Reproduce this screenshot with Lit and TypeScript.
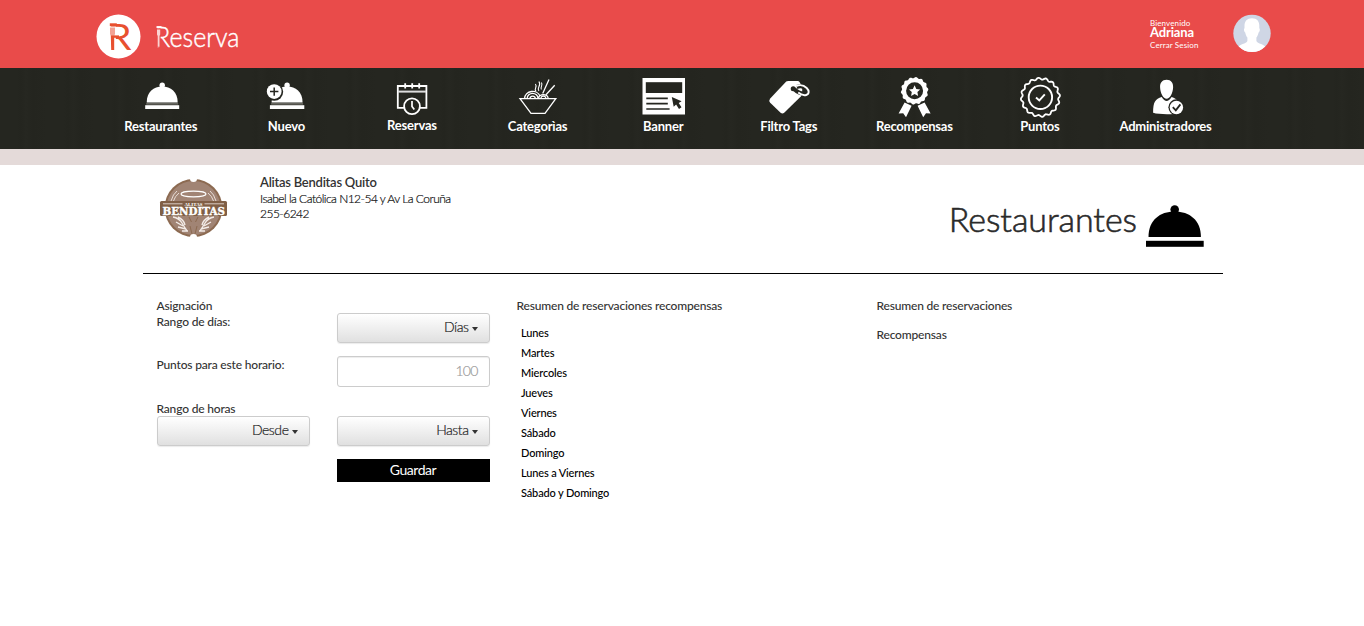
import { LitElement, html, svg, css } from "lit";
import { customElement } from "lit/decorators.js";

const scallop = (cx: number, cy: number, r: number, amp: number, lobes: number) => {
  const pts: string[] = [];
  for (let i = 0; i < 240; i++) {
    const a = (i / 240) * Math.PI * 2;
    const d = r + amp * Math.cos(a * lobes + Math.PI / 2);
    pts.push(`${(cx + d * Math.cos(a)).toFixed(2)},${(cy + d * Math.sin(a)).toFixed(2)}`);
  }
  return pts.join(" ");
};

// All menu artwork shares one sheet; each entry shows its own 60x48 window of it.
const MENU = [
  { label: "Restaurantes", art: svg`
    <circle cx="162" cy="85.3" r="2.7"/><path d="M146.5 102.6C146.5 92 153.5 86.6 162 86.6S177.5 92 177.5 102.6Z"/>
    <rect x="146" y="103" width="32" height="1.7" fill="#66665f"/><rect x="145" y="105.2" width="34" height="3.8"/>` },
  { label: "Nuevo", art: svg`
    <circle cx="287.5" cy="85.3" r="2.7"/><path d="M272 102.6C272 92 279 86.6 287.5 86.6S303 92 303 102.6Z"/>
    <rect x="271.5" y="103" width="32" height="1.7" fill="#66665f"/><rect x="270.3" y="105.2" width="34.4" height="3.8"/>
    <circle cx="274.6" cy="91.8" r="9" fill="#252620"/><circle cx="274.6" cy="91.6" r="7.4"/>
    <path d="M274.6 87.4v8.4M270.4 91.6h8.4" stroke="#252620" stroke-width="1.5"/>` },
  { label: "Reservas", art: svg`
    <path d="M404.5 107.8H397.8V86H426.4V107.8H419.5M405.2 83.2V88.4M412.2 83.2V88.4M419.2 83.2V88.4" fill="none" stroke="#fff" stroke-width="1.8"/>
    <path d="M398 91.6H426" stroke="#ddd" stroke-width="2"/>
    <circle cx="412" cy="106.2" r="7.9" fill="none" stroke="#fff" stroke-width="1.8"/><path d="M412 101v5.4l2.3 3" fill="none" stroke="#fff" stroke-width="1.7"/>` },
  { label: "Categorìas", art: svg`
    <g fill="none" stroke="#fff" stroke-width="1.3"><path d="M519.6 98.6H555.4L544.6 113.4H530.6Z"/>
    <path d="M524.2 98.3a8 7.4 0 0 1 15.5-2M526.8 98.3a5.4 5 0 0 1 10.8 0M529.5 98.3a2.8 2.6 0 0 1 5.5 0M538.2 98a5 4.6 0 0 1 9.6 0M540.5 98a2.6 2.5 0 0 1 5 0"/>
    <path d="M548.6 79.5L542.3 93.5M554.3 85.2L545.6 94.8"/><path d="M535.6 91.5c-2.8-3 2-4-.6-7.5M538.5 91c-2.8-3.5 3-5 0-9.5M541 89.5c-1.6-2.5 2-4 0-7" stroke-width="1.1"/></g>` },
  { label: "Banner", art: svg`
    <rect x="642.7" y="78" width="42.5" height="36.5"/><rect x="646" y="82.2" width="36.4" height="10.8" fill="#252620"/>
    <path d="M646.5 98.4H668M646.5 103.6H668M646.5 109H669.8" stroke="#252620" stroke-width="1.6"/>
    <path d="M672 97L681.8 101.3 678.9 102.9 681.7 107.3 679.2 109 676.3 104.5 673.9 106.8Z" fill="#252620"/>` },
  { label: "Filtro Tags", art: svg`
    <path d="M786 81.5Q786.8 81 788 81H797.5Q798.6 81 799.3 82L801 85Q802 87 802 89V93Q802 95.2 800.6 96.6L784 112.8Q782.2 114.4 780.4 112.8L770 102.8Q768.2 101 769.8 98.8Z"/>
    <path d="M794 89C797 92 801 94 805 93.4C807.8 92.6 807.2 89.8 805.5 88.4C803 86 800 85.8 796.5 87" fill="none" stroke="#252620" stroke-width="4"/>
    <circle cx="793" cy="88.7" r="2.5" fill="#252620"/>
    <path d="M798 92.6C800.5 94.6 803.5 95.7 806 95C809.4 94 809 90.4 806.5 88C803.5 85 799.5 84.6 796 86" fill="none" stroke="#fff" stroke-width="1.9"/>` },
  { label: "Recompensas", art: svg`
    <polygon points=${scallop(915, 90.8, 13.2, 0.6, 14)}/><circle cx="915" cy="90.8" r="8.5" fill="#252620"/>
    <path d="M915 85.3l1.7 3.6 3.9.5-2.8 2.7.7 3.9-3.5-1.9-3.5 1.9.7-3.9-2.8-2.7 3.9-.5Z"/>
    <path d="M905 102.5L899 113.6 903.6 113.2 906.4 117.2 912 105.7ZM925 102.5L931 113.6 926.4 113.2 923.6 117.2 918 105.7Z"/>` },
  { label: "Puntos", art: svg`
    <polygon points=${scallop(1040.4, 97.3, 18.7, 0.9, 16)} fill="none" stroke="#fff" stroke-width="1.8"/>
    <circle cx="1040.4" cy="97.3" r="11.7" fill="none" stroke="#fff" stroke-width="1.9"/><path d="M1036 97.5l3.3 3 5.5-6.2" fill="none" stroke="#fff" stroke-width="1.9"/>` },
  { label: "Administradores", art: svg`
    <path d="M1166.2 79.8C1170.7 79.8 1172.9 83 1172.7 87.5C1172.5 93 1169.5 98.8 1166.2 98.8S1159.9 93 1159.7 87.5C1159.5 83 1161.7 79.8 1166.2 79.8Z"/>
    <path d="M1161.3 97Q1163.8 101 1166.2 101T1171.2 97C1177 99 1179.5 101 1179.8 113C1173 114.7 1159 114.7 1152.7 112.8C1152.8 101.5 1155 99 1161.3 97Z"/>
    <circle cx="1176" cy="107.3" r="8" fill="#252620"/><circle cx="1176" cy="107.5" r="6.7"/><path d="M1172.4 107.2l3 3.2 4.6-6" fill="none" stroke="#252620" stroke-width="1.8"/>` },
];

const DAYS = ["Lunes", "Martes", "Miercoles", "Jueves", "Viernes", "Sábado", "Domingo", "Lunes a Viernes", "Sábado y Domingo"];

@customElement("app-root")
export class AppRoot extends LitElement {
  static styles = css`
    :host { display: block; height: 626px; overflow: hidden; background: #fff; color: #333; font-family: Lato, "Open Sans", sans-serif; font-size: 14px; }
    * { box-sizing: border-box; }
    svg { display: block; overflow: visible; }
    .top { height: 68px; background: #e94b4a; display: flex; justify-content: space-between; padding: 0 93.5px 0 90px; }
    .user { display: flex; color: #fff; }
    .who { width: 82.5px; padding-top: 19px; font-size: 8px; line-height: 9px; white-space: nowrap; letter-spacing: 0.12px; }
    .who b { display: block; font-size: 13px; line-height: 8px; letter-spacing: -0.15px; }
    .who .out { display: block; padding-top: 5px; }
    .menu { height: 81px; padding-left: 98px; display: flex; color: #fff;
      background: repeating-linear-gradient(90deg, #252620 0 17px, #24251f 21px, #262721 26px, #24251f 33px, #252620 47px); }
    .item { width: 125.6px; padding-top: 4px; display: flex; flex-direction: column; align-items: center; font-size: 13px; font-weight: 700; line-height: 12px; white-space: nowrap; letter-spacing: -0.2px; }
    .item:nth-child(3) span { margin-top: -1px; }
    .strip { height: 16px; background: #e4dad9; }
    .page { width: 1080px; margin-left: 143px; }
    .head { height: 109px; border-bottom: 1px solid #000; display: flex; }
    .brand { padding: 12px 0 0 15px; width: 117px; }
    .info { padding-top: 9px; flex: 1; font-size: 12px; line-height: 15px; font-weight: 300; color: #111; letter-spacing: -0.52px; -webkit-text-stroke: 0.2px #111; }
    .info strong { display: block; font-size: 13px; line-height: 17px; font-weight: 600; color: #333; letter-spacing: -0.25px; -webkit-text-stroke: 0; }
    .title { margin: 0; padding-top: 32px; font-size: 34px; line-height: 44px; font-weight: 300; letter-spacing: -0.05px; color: #2a2a2a; -webkit-text-stroke: 0.6px #2a2a2a; }
    .cloche { padding: 38px 18px 0 8px; }
    .cols { display: grid; grid-template-columns: 360px 360px 360px; padding-top: 24px; font-size: 12px; line-height: 16px; font-weight: 500; letter-spacing: -0.18px; }
    .col { padding-left: 13.5px; }
    .form { display: grid; grid-template-columns: 153px 153px; column-gap: 27px; grid-template-rows: 58px 45px 59px 24px; }
    .second { padding-top: 15px; }
    .points { padding-top: 1px; }
    .hours { line-height: 15px; }
    .field { display: flex; align-items: center; justify-content: flex-end; width: 153px; height: 30px; border: 1px solid #ccc; border-radius: 3px; padding: 0 11px 2px; font-size: 14px; line-height: 16px; font-weight: 300; color: #222; letter-spacing: -0.45px; -webkit-text-stroke: 0.2px #222;
      background: linear-gradient(#fff, #e0e0e0); box-shadow: 0 1px 1px rgba(0, 0, 0, 0.08); }
    .caret { border: 3.5px solid transparent; border-top: 4px solid #333; border-bottom: 0; margin: 3px 0 0 3px; }
    .input { height: 31px; background: #fff; color: #999; letter-spacing: -0.8px; -webkit-text-stroke: 0.2px #999; box-shadow: inset 0 1px 1px rgba(0, 0, 0, 0.075); }
    .save { height: 23px; margin-top: -1px; background: #000; color: #fff; text-align: center; font-size: 14px; line-height: 22px; font-weight: 400; letter-spacing: -0.45px; }
    .days { margin: 9px 0 0; padding: 0 0 0 4.5px; list-style: none; color: #000; font-size: 11px; line-height: 20px; letter-spacing: -0.15px; }
    .rewards { padding-top: 13px; }
  `;

  render() {
    return html`
      <header class="top">
        <svg width="160" height="68" viewBox="90 0 160 68">
          <circle cx="118.5" cy="36.5" r="22" fill="#fff"/>
          <text x="107.5" y="49.8" font-size="37" font-family="Lato" fill="#e8502f" textLength="24" lengthAdjust="spacingAndGlyphs">R</text>
          <path d="M108 26.5h7.8V51H108Z" fill="#fff"/>
          <path d="M109.8 24.7h7" stroke="#e8502f" stroke-width="2.8"/>
          <path d="M110 27.5h5v6q0 2-1.5 2.7H111.5Q110 35.5 110 33.5Z" fill="#f3a293"/>
          <path d="M110.8 35.5h3.4V50h-3Z" fill="#e8502f"/><path d="M114 36.6h5" stroke="#e8502f" stroke-width="2.4"/>
          <text x="155" y="46.8" font-size="28" font-family="Lato" font-weight="300" fill="#fff" stroke="#fff" stroke-width=".45" textLength="84.5" lengthAdjust="spacingAndGlyphs">Reserva</text>
          <path d="M156 28.3h4.6V47.300H156Z" fill="#e94b4a"/><path d="M156.5 27h5" stroke="#fff" stroke-width="1.800"/>
          <path d="M157 29.5h3.2v5l-.7 1.5V46.8h-1.8V36l-.7-1.5Z" fill="#fbd3d2"/>
        </svg>
        <div class="user">
          <div class="who">Bienvenido<b>Adriana</b><span class="out">Cerrar Sesion</span></div>
          <svg width="38" height="68" viewBox="1232.5 0 38 68">
            <clipPath id="face"><circle cx="1251.5" cy="33.4" r="18.7"/></clipPath>
            <circle cx="1251.5" cy="33.4" r="18.7" fill="#cfd6e5"/>
            <path clip-path="url(#face)" fill="#fff" d="M1251.5 18.3c5 0 7.3 3 7.3 7.5v2.5c.9.5.6 3.5-.7 4.2-.6 2.5-1.3 4-2.2 5v3.5c1 3 8 2.5 10.5 8v5h-30v-5c2.5-5.5 9.5-5 10.5-8v-3.5c-1-1-1.6-2.5-2.2-5-1.3-.7-1.6-3.7-.7-4.2v-2.5c0-4.5 2.5-7.5 7.5-7.5Z"/>
          </svg>
        </div>
      </header>
      <nav class="menu">
        ${MENU.map((m, i) => html`<div class="item">
          <svg width="60" height="48" viewBox="${130.8 + i * 125.6} 72 60 48" fill="#fff">${m.art}</svg><span>${m.label}</span></div>`)}
      </nav>
      <div class="strip"></div>
      <main class="page">
        <section class="head">
          <div class="brand">
            <svg width="72" height="64" viewBox="158 177 72 64">
              <circle cx="193.5" cy="208" r="29" fill="#8c6a51"/><circle cx="193.5" cy="208" r="27" fill="#a18474"/>
              <path d="M190 179a3.5 3 0 0 0 7 0ZM190 237a3.5 3 0 0 1 7 0Z" fill="#fff"/>
              <ellipse cx="193.5" cy="194" rx="12.5" ry="2.8" fill="none" stroke="#fff" stroke-width="1.2"/>
              <path d="M171 201Q173 194 177 191M173 202Q175 196 179 193M216 201Q214 194 210 191M214 202Q212 196 208 193" fill="none" stroke="#e9ded8"/>
              <path d="M173 217q6 1 9 6t5 8M178 217q6 3 7 8M176 222l7 4M178 227l8 2M182 231l6 0M214 217q-6 1-9 6t-5 8M209 217q-6 3-7 8M211 222l-7 4M209 227l-8 2M205 231l-6 0" fill="none" stroke="#f3ece8" stroke-width="1.4"/>
              <path d="M189 217l2.5 5M198 217l-2.5 5M190 226l2 8M197 226l-2 8" stroke="#8c6a51" stroke-width="1"/>
              <rect x="160" y="201" width="67" height="15" rx="1.5" fill="#805f46"/>
              <path d="M163 203.8H182.5M204.5 203.8H224" stroke="#d9cbc1"/>
              <text x="184.5" y="205.5" font-size="5" font-weight="700" font-family="Liberation Serif" fill="#fff" textLength="18" lengthAdjust="spacingAndGlyphs">ALITAS</text>
              <text x="162.5" y="215" font-size="11.5" font-weight="700" font-family="DejaVu Serif" fill="#fff" stroke="#fff" stroke-width=".4" textLength="62.5" lengthAdjust="spacingAndGlyphs">BENDITAS</text>
            </svg>
          </div>
          <div class="info"><strong>Alitas Benditas Quito</strong>Isabel la Católica N12-54 y Av La Coruña<br>255-6242</div>
          <h1 class="title">Restaurantes</h1>
          <div class="cloche"><svg width="60" height="46" viewBox="1145 203 60 46">
            <circle cx="1174.700" cy="209.5" r="4.3"/><path d="M1148.500 237C1148.500 220 1160 211.5 1174.700 211.5S1200.900 220 1200.900 237Z"/>
            <rect x="1146" y="240.8" width="57.700" height="6"/></svg></div>
        </section>
        <section class="cols">
          <div class="col"><div class="form">
            <div>Asignación<br>Rango de días:</div>
            <div class="second"><div class="field">Días<i class="caret"></i></div></div>
            <div class="points">Puntos para este horario:</div>
            <div><div class="field input">100</div></div>
            <div class="hours">Rango de horas<div class="field">Desde<i class="caret"></i></div></div>
            <div class="second"><div class="field">Hasta<i class="caret"></i></div></div>
            <div></div><div class="save">Guardar</div>
          </div></div>
          <div class="col">Resumen de reservaciones recompensas
            <ul class="days">${DAYS.map((d) => html`<li>${d}</li>`)}</ul></div>
          <div class="col">Resumen de reservaciones<div class="rewards">Recompensas</div></div>
        </section>
      </main>`;
  }
}
